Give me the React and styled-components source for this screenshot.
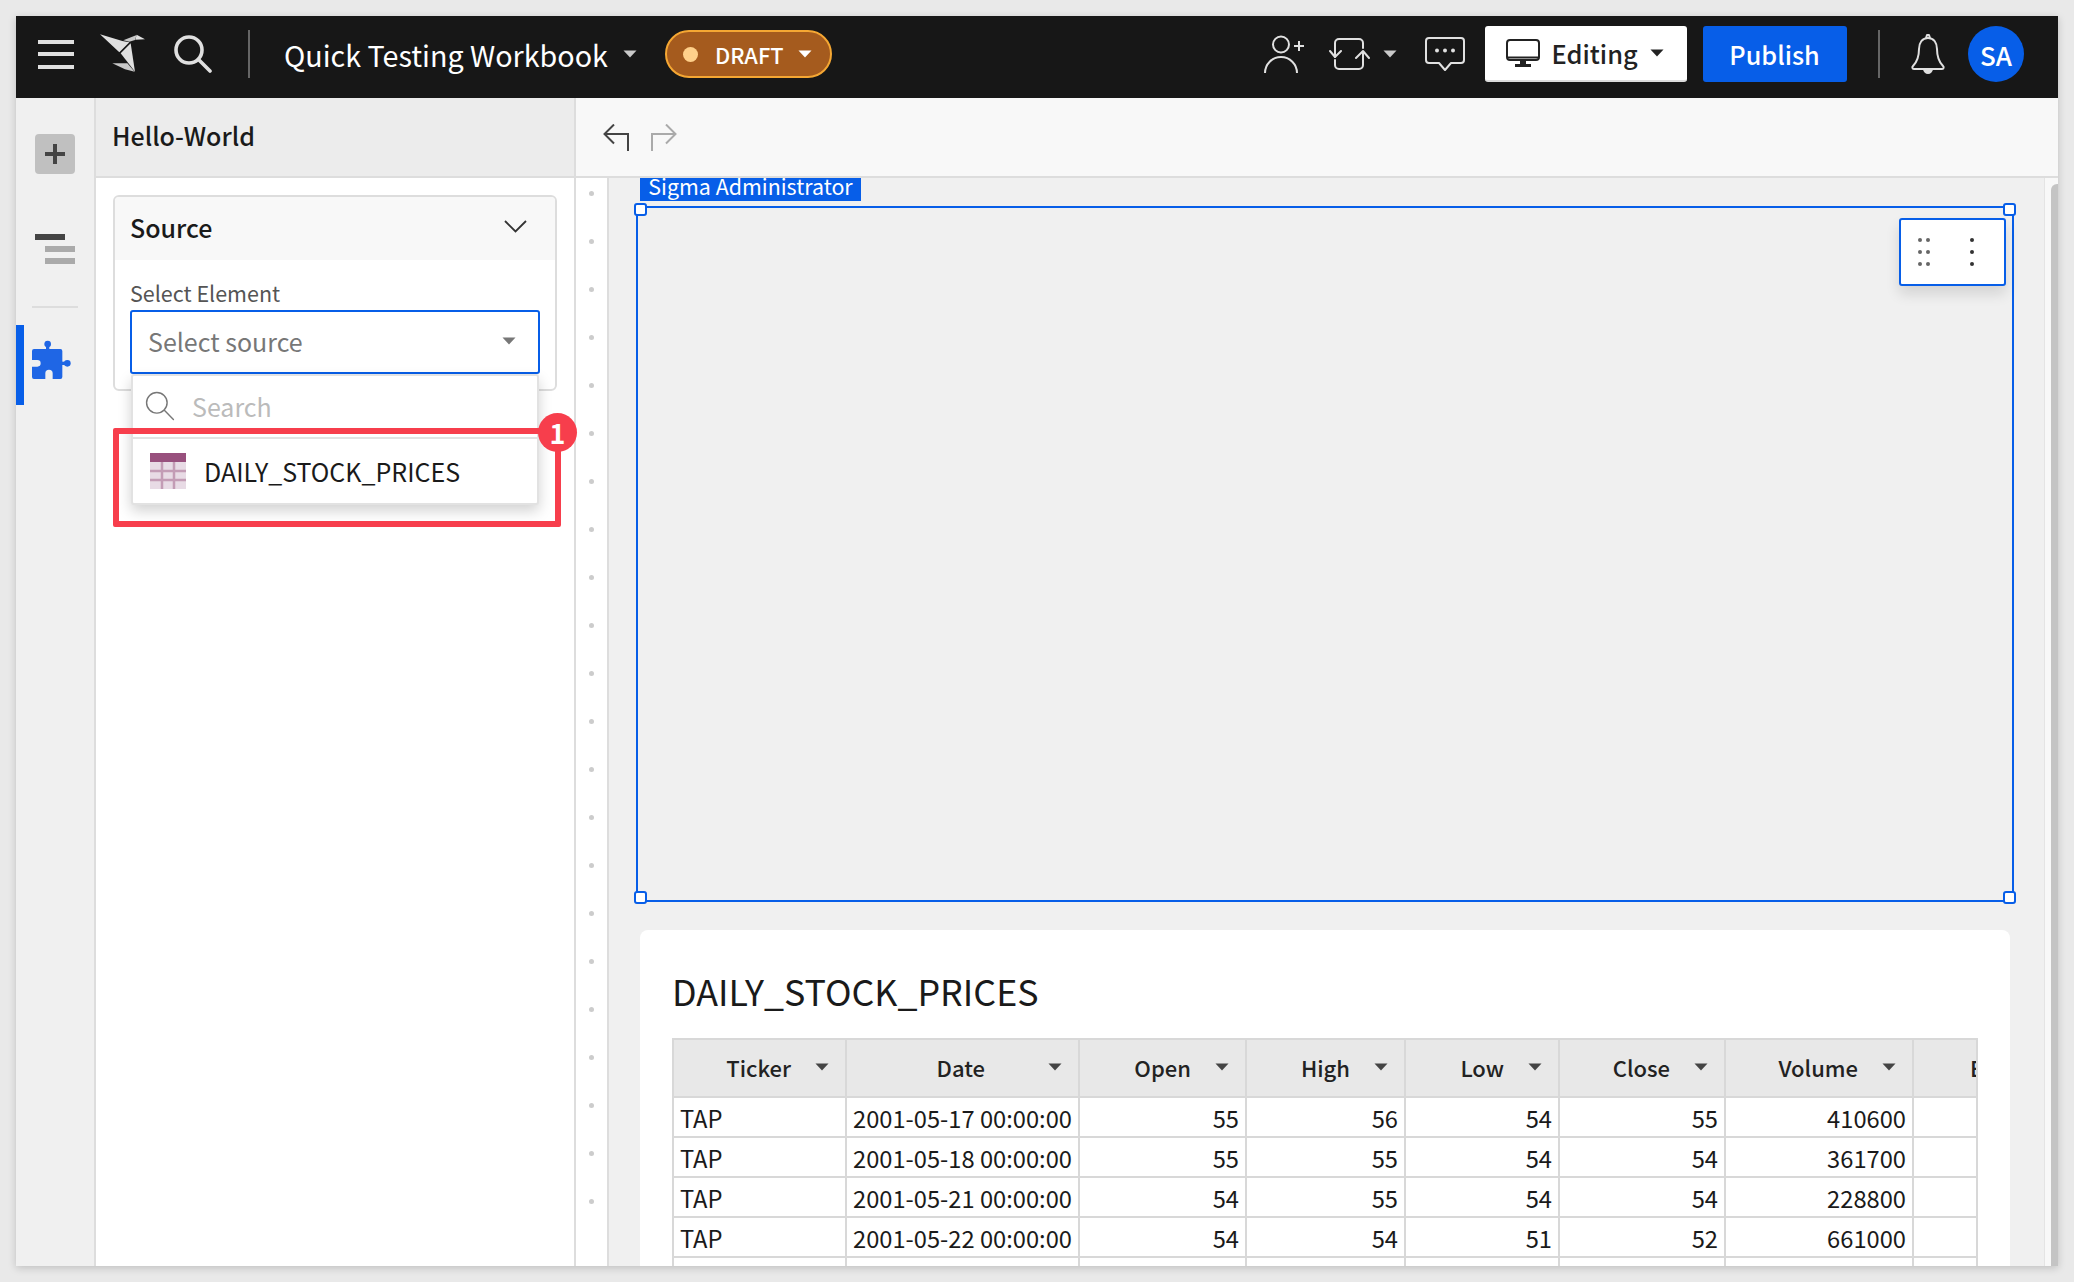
import React from 'react';
import styled, { createGlobalStyle } from 'styled-components';

const GlobalStyle = createGlobalStyle`
  html, body {
    margin: 0;
    padding: 0;
    background: #e9e9e9;
  }
  * {
    box-sizing: border-box;
  }
`;

const columns = [
  { title: 'Ticker', width: 173, gap: 24 },
  { title: 'Date', width: 233, gap: 63 },
  { title: 'Open', width: 167, gap: 24, num: true },
  { title: 'High', width: 159, gap: 24, num: true },
  { title: 'Low', width: 154, gap: 24, num: true },
  { title: 'Close', width: 166, gap: 24, num: true },
  { title: 'Volume', width: 188, gap: 24, num: true },
  { title: 'E', width: 64, last: true },
];

const rows = [
  ['TAP', '2001-05-17 00:00:00', 55, 56, 54, 55, 410600, ''],
  ['TAP', '2001-05-18 00:00:00', 55, 55, 54, 54, 361700, ''],
  ['TAP', '2001-05-21 00:00:00', 54, 55, 54, 54, 228800, ''],
  ['TAP', '2001-05-22 00:00:00', 54, 54, 51, 52, 661000, ''],
  ['', '', '', '', '', '', '', ''],
];

export default function App() {
  return (
    <>
      <GlobalStyle />
      <Page>
        <Window>
          <TopBar>
            <TopGroup>
              <Hamburger>
                <span />
                <span />
                <span />
              </Hamburger>
              <IconSlot $ml={26}>
                <LogoIcon />
              </IconSlot>
              <IconSlot $ml={28}>
                <SearchIcon size={38} color="#e0e0e0" strokeWidth={3.6} />
              </IconSlot>
              <BarDivider $ml={36} />
              <WorkbookTitle>Quick Testing Workbook</WorkbookTitle>
              <IconSlot $ml={15}>
                <Caret color="#c9c9c9" />
              </IconSlot>
              <DraftPill>
                <DraftDot />
                DRAFT
                <Caret color="#fff" />
              </DraftPill>
            </TopGroup>
            <TopGroup>
              <PersonAddIcon />
              <IconSlot $ml={24}>
                <SyncIcon />
              </IconSlot>
              <IconSlot $ml={13}>
                <Caret color="#c9c9c9" />
              </IconSlot>
              <IconSlot $ml={28}>
                <CommentIcon />
              </IconSlot>
              <EditingButton>
                <MonitorIcon />
                Editing
                <Caret color="#222" />
              </EditingButton>
              <PublishButton>Publish</PublishButton>
              <BarDivider $ml={31.5} />
              <IconSlot $ml={-3}>
                <BellIcon />
              </IconSlot>
              <Avatar>SA</Avatar>
            </TopGroup>
          </TopBar>
          <Body>
            <Rail>
              <AddButton>
                <PlusIcon />
              </AddButton>
              <OutlineIcon>
                <OutlineBar />
                <OutlineBar $muted />
                <OutlineBar $muted />
              </OutlineIcon>
              <RailDivider />
              <PluginTab>
                <PuzzleIcon />
              </PluginTab>
            </Rail>
            <SidePanel>
              <PanelHeader>Hello-World</PanelHeader>
              <PanelContent>
                <SourceCard>
                  <SourceHeader>
                    Source
                    <ChevronIcon />
                  </SourceHeader>
                  <SourceBody>
                    <FieldLabel>Select Element</FieldLabel>
                    <SelectField>
                      Select source
                      <Caret color="#777" />
                      <Dropdown>
                        <SearchRow>
                          <SearchIcon size={30} color="#777" strokeWidth={1.8} />
                          Search
                        </SearchRow>
                        <OptionRow>
                          <TableIcon />
                          DAILY_STOCK_PRICES
                        </OptionRow>
                      </Dropdown>
                    </SelectField>
                  </SourceBody>
                </SourceCard>
                <Highlight>
                  <Badge>1</Badge>
                </Highlight>
              </PanelContent>
            </SidePanel>
            <Main>
              <SubBar>
                <UndoIcon color="#444" />
                <RedoIcon color="#aaa" />
              </SubBar>
              <Workspace>
                <Ruler>
                  {Array.from({ length: 22 }, (_, i) => (
                    <RulerDot key={i} />
                  ))}
                </Ruler>
                <Canvas>
                  <SelectedBox>
                    <UserTag>Sigma Administrator</UserTag>
                    <Handle $corner="tl" />
                    <Handle $corner="tr" />
                    <Handle $corner="bl" />
                    <Handle $corner="br" />
                    <FloatingTools>
                      <DotGrid>
                        {Array.from({ length: 6 }, (_, i) => (
                          <ToolDot key={i} />
                        ))}
                      </DotGrid>
                      <Kebab>
                        <ToolDot $dark />
                        <ToolDot $dark />
                        <ToolDot $dark />
                      </Kebab>
                    </FloatingTools>
                  </SelectedBox>
                  <TableCard>
                    <TableTitle>DAILY_STOCK_PRICES</TableTitle>
                    <DataTable>
                      <HeaderRow>
                        {columns.map((col) => (
                          <HeaderCell key={col.title} $width={col.width} $gap={col.gap} $last={col.last}>
                            {col.title}
                            {!col.last && <Caret color="#444" />}
                          </HeaderCell>
                        ))}
                      </HeaderRow>
                      {rows.map((row, r) => (
                        <DataRow key={r}>
                          {row.map((value, c) => (
                            <DataCell key={c} $width={columns[c].width} $num={columns[c].num}>
                              {value}
                            </DataCell>
                          ))}
                        </DataRow>
                      ))}
                    </DataTable>
                  </TableCard>
                </Canvas>
                <ScrollGutter>
                  <ScrollThumb />
                </ScrollGutter>
              </Workspace>
            </Main>
          </Body>
        </Window>
      </Page>
    </>
  );
}

function Caret({ color }) {
  return (
    <CaretSvg viewBox="0 0 14 8" fill={color}>
      <path d="M0.5 0.5h13L7 7.5z" />
    </CaretSvg>
  );
}

function LogoIcon() {
  return (
    <svg width="46" height="40" viewBox="30 27 138 120" fill="#e0e0e0" style={{ display: 'block' }}>
      <polygon points="30,28 97,48 118,52 88,82" />
      <polygon points="100,46 140,30 135,45 118,50" fill="#c8c8c8" />
      <polygon points="140,29 165,43 136,44" />
      <polygon points="92,85 122,55 135,140" />
      <polygon points="67,115 112,115 134,140 105,133" fill="#c8c8c8" />
    </svg>
  );
}

function SearchIcon({ size, color, strokeWidth }) {
  return (
    <svg width={size} height={size} viewBox="0 0 38 38" fill="none" stroke={color} strokeWidth={strokeWidth} strokeLinecap="round" style={{ display: 'block', flexShrink: 0 }}>
      <circle cx="15" cy="15" r="13" />
      <path d="M24.5 24.5L36 36" />
    </svg>
  );
}

function PersonAddIcon() {
  return (
    <svg width="41" height="38" viewBox="0 0 41 38" fill="none" stroke="#e0e0e0" strokeWidth="2" style={{ display: 'block', flexShrink: 0 }}>
      <circle cx="17" cy="9.5" r="8" />
      <path d="M1 38a16 16 0 0 1 32 0" />
      <path d="M30 11h10M35 6v10" />
    </svg>
  );
}

function SyncIcon() {
  return (
    <svg width="41" height="32" viewBox="0 0 41 32" fill="none" stroke="#e0e0e0" strokeWidth="2" strokeLinecap="round" strokeLinejoin="round" style={{ display: 'block' }}>
      <path d="M6 19V5a4 4 0 0 1 4-4h20a4 4 0 0 1 4 4v5" />
      <path d="M1 13l5 6 6-6" />
      <path d="M34 14v13a4 4 0 0 1-4 4H10a4 4 0 0 1-4-4v-5" />
      <path d="M27 20l7-7 6 7" />
    </svg>
  );
}

function CommentIcon() {
  return (
    <svg width="40" height="34" viewBox="0 0 40 34" fill="none" style={{ display: 'block' }}>
      <path d="M4 1h32a3 3 0 0 1 3 3v19a3 3 0 0 1-3 3H26l-6 7-6-7H4a3 3 0 0 1-3-3V4a3 3 0 0 1 3-3z" stroke="#e0e0e0" strokeWidth="2" strokeLinejoin="round" />
      <circle cx="12" cy="13.5" r="2" fill="#e0e0e0" />
      <circle cx="20" cy="13.5" r="2" fill="#e0e0e0" />
      <circle cx="28" cy="13.5" r="2" fill="#e0e0e0" />
    </svg>
  );
}

function MonitorIcon() {
  return (
    <svg width="34" height="28" viewBox="0 0 34 28" fill="none" style={{ flexShrink: 0 }}>
      <rect x="1" y="1" width="32" height="20" rx="3" stroke="#222" strokeWidth="2" />
      <path d="M1 18.5h32" stroke="#222" strokeWidth="2" />
      <path d="M14 21h6v4h-6zM9 25h16v3H9z" fill="#222" />
    </svg>
  );
}

function BellIcon() {
  return (
    <svg width="34" height="40" viewBox="0 0 34 40" fill="none" stroke="#e0e0e0" strokeWidth="2" strokeLinejoin="round" style={{ display: 'block' }}>
      <path d="M17 4c-6 0-9 5-9 11 0 8-2 13-6 17-1 1-1 3 1 3h28c2 0 2-2 1-3-4-4-6-9-6-17 0-6-3-11-9-11z" />
      <path d="M15 4l1-3h2l1 3" />
      <path d="M13 35c0 2 2 4 4 4s4-2 4-4z" fill="#e0e0e0" />
    </svg>
  );
}

function PlusIcon() {
  return (
    <svg width="20" height="20" viewBox="0 0 20 20" fill="#444">
      <path d="M8 0h4v8h8v4h-8v8H8v-8H0V8h8z" />
    </svg>
  );
}

function PuzzleIcon() {
  return (
    <svg width="42" height="40" viewBox="30 30 126 120" fill="#1f66e5" style={{ display: 'block' }}>
      <path d="M42 57H121a6 6 0 0 1 6 6V141a6 6 0 0 1-6 6H98V130a11 11 0 0 0-22 0V147H42a6 6 0 0 1-6-6V110H52a10 10 0 0 0 0-20H36V63a6 6 0 0 1 6-6z" />
      <circle cx="83" cy="42" r="10" />
      <rect x="78" y="42" width="10" height="18" />
      <circle cx="142" cy="100" r="10" />
      <rect x="125" y="95" width="17" height="10" />
    </svg>
  );
}

function ChevronIcon() {
  return (
    <svg width="23" height="13" viewBox="0 0 23 13" fill="none" stroke="#333" strokeWidth="1.8">
      <path d="M1 1l10.5 10.5L22 1" />
    </svg>
  );
}

function TableIcon() {
  return (
    <svg width="36" height="36" viewBox="0 0 36 36" style={{ flexShrink: 0 }}>
      <rect width="36" height="36" fill="#e8dbe5" />
      <rect width="36" height="9" fill="#98507d" />
      <path d="M0 18h36M0 27h36M12 9v27M24 9v27" stroke="#c39cb5" strokeWidth="2.5" />
    </svg>
  );
}

function UndoIcon({ color }) {
  return (
    <svg width="26" height="27" viewBox="0 0 26 27" fill="none" stroke={color} strokeWidth="2">
      <path d="M11 0.5L1.5 10l9.5 9.5" />
      <path d="M2 10h23v17" />
    </svg>
  );
}

function RedoIcon({ color }) {
  return (
    <svg width="26" height="27" viewBox="0 0 26 27" fill="none" stroke={color} strokeWidth="2">
      <path d="M15 0.5L24.5 10 15 19.5" />
      <path d="M24 10H1v17" />
    </svg>
  );
}

const CaretSvg = styled.svg`
  display: block;
  width: 14px;
  height: 8px;
  flex-shrink: 0;
`;

const Page = styled.div`
  width: 2074px;
  height: 1282px;
  padding: 16px;
  background: #e9e9e9;
  font-family: 'Noto Sans CJK SC', 'Noto Sans', sans-serif;
  overflow: hidden;
`;

const Window = styled.div`
  width: 2042px;
  height: 1250px;
  display: flex;
  flex-direction: column;
  overflow: hidden;
  background: #f0f0f0;
  box-shadow: 0 2px 8px rgba(0, 0, 0, 0.18);
`;

const TopBar = styled.header`
  height: 82px;
  flex-shrink: 0;
  display: flex;
  align-items: center;
  justify-content: space-between;
  padding: 0 34px 6px 22px;
  background: #171717;
`;

const TopGroup = styled.div`
  display: flex;
  align-items: center;
`;

const IconSlot = styled.span`
  display: block;
  flex-shrink: 0;
  margin-left: ${(p) => p.$ml}px;
`;

const Hamburger = styled.div`
  width: 36px;
  display: flex;
  flex-direction: column;
  gap: 8.5px;

  span {
    display: block;
    height: 4px;
    background: #e0e0e0;
  }
`;

const BarDivider = styled.div`
  width: 2px;
  height: 48px;
  margin: 0 34px 0 ${(p) => p.$ml}px;
  background: #666;
`;

const WorkbookTitle = styled.div`
  font-size: 28.7px;
  color: #fff;
  white-space: nowrap;
`;

const DraftPill = styled.div`
  height: 48px;
  width: 167px;
  margin-left: 28px;
  display: flex;
  align-items: center;
  gap: 14px;
  padding: 0 16px;
  border: 2px solid #f5a733;
  border-radius: 24px;
  background: #a55b1e;
  color: #fff;
  font-size: 21.8px;
  font-weight: 500;
`;

const DraftDot = styled.span`
  width: 15px;
  height: 15px;
  margin-right: 3px;
  border-radius: 50%;
  background: #ffd08a;
  flex-shrink: 0;
`;

const EditingButton = styled.button`
  width: 202px;
  height: 56px;
  margin-left: 20px;
  display: flex;
  align-items: center;
  gap: 12px;
  padding: 0 21px;
  border: none;
  border-bottom: 2px solid #ddd;
  border-radius: 3px;
  background: #fff;
  color: #222;
  font-family: inherit;
  font-size: 25.4px;
  font-weight: 500;
`;

const PublishButton = styled.button`
  width: 144px;
  height: 56px;
  margin-left: 16px;
  border: none;
  border-radius: 3px;
  background: #075ee8;
  color: #fff;
  font-family: inherit;
  font-size: 25.2px;
  font-weight: 500;
`;

const Avatar = styled.div`
  width: 56px;
  height: 56px;
  margin-left: 23px;
  display: flex;
  align-items: center;
  justify-content: center;
  border-radius: 50%;
  background: #075ee8;
  color: #fff;
  font-size: 26px;
  font-weight: 500;
`;

const Body = styled.div`
  flex: 1;
  min-height: 0;
  display: flex;
`;

const Rail = styled.nav`
  width: 80px;
  flex-shrink: 0;
  display: flex;
  flex-direction: column;
  align-items: flex-start;
  padding-top: 36px;
  background: #f0f0f0;
  border-right: 2px solid #ddd;
`;

const AddButton = styled.div`
  width: 40px;
  height: 40px;
  margin-left: 19px;
  display: flex;
  align-items: center;
  justify-content: center;
  border-radius: 4px;
  background: #c0c0c0;
`;

const OutlineIcon = styled.div`
  width: 40px;
  margin: 60px 0 0 19px;
  display: flex;
  flex-direction: column;
  align-items: flex-start;
  gap: 6px;
`;

const OutlineBar = styled.span`
  width: 30px;
  height: 6px;
  margin-left: ${(p) => (p.$muted ? '10px' : '0')};
  background: ${(p) => (p.$muted ? '#aaa' : '#444')};
`;

const RailDivider = styled.div`
  width: 46px;
  height: 2px;
  margin: 42px 0 0 16px;
  background: #ddd;
`;

const PluginTab = styled.div`
  width: 64px;
  height: 80px;
  margin-top: 17px;
  display: flex;
  align-items: center;
  padding: 0 0 10px 6px;
  border-left: 8px solid #075ee8;
`;

const SidePanel = styled.aside`
  width: 480px;
  flex-shrink: 0;
  display: flex;
  flex-direction: column;
  background: #fff;
  border-right: 2px solid #ddd;
`;

const PanelHeader = styled.div`
  height: 80px;
  flex-shrink: 0;
  display: flex;
  align-items: center;
  padding: 0 0 4px 16px;
  border-bottom: 2px solid #ddd;
  background: #ececec;
  color: #1a1a1a;
  font-size: 25px;
  font-weight: 500;
`;

const PanelContent = styled.div`
  position: relative;
  flex: 1;
  padding: 17px 17px 0 17px;
`;

const SourceCard = styled.section`
  height: 196px;
  border: 2px solid #ddd;
  border-radius: 6px;
`;

const SourceHeader = styled.div`
  height: 63px;
  display: flex;
  align-items: center;
  justify-content: space-between;
  padding: 0 28px 4px 15px;
  border-radius: 4px 4px 0 0;
  background: #f8f8f8;
  color: #1a1a1a;
  font-size: 25px;
  font-weight: 500;
`;

const SourceBody = styled.div`
  padding: 14px 15px 0 15px;
`;

const FieldLabel = styled.div`
  height: 36px;
  display: flex;
  align-items: center;
  color: #555;
  font-size: 21.5px;
`;

const SelectField = styled.div`
  position: relative;
  height: 64px;
  display: flex;
  align-items: center;
  justify-content: space-between;
  padding: 0 22px 2px 16px;
  border: 2px solid #075ee8;
  border-radius: 3px;
  color: #777;
  font-size: 25px;
`;

const Dropdown = styled.div`
  position: absolute;
  top: calc(100% + 2px);
  left: -1px;
  right: -1px;
  height: 131px;
  background: #fff;
  border: 2px solid #e2e2e2;
  border-radius: 3px;
  box-shadow: 0 6px 14px rgba(0, 0, 0, 0.18);
  z-index: 2;
`;

const SearchRow = styled.div`
  height: 63px;
  display: flex;
  align-items: center;
  gap: 17px;
  padding: 0 0 2px 12px;
  color: #bbb;
  font-size: 25px;
  border-bottom: 2px solid #e2e2e2;
`;

const OptionRow = styled.div`
  height: 64px;
  display: flex;
  align-items: center;
  gap: 18px;
  padding-left: 17px;
  color: #1a1a1a;
  font-size: 25px;
`;

const Highlight = styled.div`
  position: absolute;
  left: 17px;
  top: 250px;
  width: 448px;
  height: 99px;
  border: 6px solid #f73e4c;
  border-radius: 2px;
  z-index: 3;
`;

const Badge = styled.div`
  position: absolute;
  top: -21px;
  right: -22px;
  width: 39px;
  height: 39px;
  display: flex;
  align-items: center;
  justify-content: center;
  border-radius: 50%;
  background: #f73e4c;
  color: #fff;
  font-size: 27px;
  font-weight: 700;
`;

const Main = styled.main`
  flex: 1;
  min-width: 0;
  display: flex;
  flex-direction: column;
`;

const SubBar = styled.div`
  height: 80px;
  flex-shrink: 0;
  display: flex;
  align-items: center;
  gap: 22px;
  padding-left: 27px;
  border-bottom: 2px solid #ddd;
  background: #f8f8f8;
`;

const Workspace = styled.div`
  flex: 1;
  min-height: 0;
  display: flex;
`;

const Ruler = styled.div`
  width: 33px;
  flex-shrink: 0;
  display: flex;
  flex-direction: column;
  align-items: center;
  gap: 43px;
  padding-top: 13px;
  overflow: hidden;
  background: #fff;
  border-right: 2px solid #ddd;
`;

const RulerDot = styled.span`
  width: 5px;
  height: 5px;
  flex-shrink: 0;
  border-radius: 50%;
  background: #ccc;
`;

const Canvas = styled.div`
  flex: 1;
  min-width: 0;
  display: flex;
  flex-direction: column;
  padding: 28px 30px 0 27px;
  overflow: hidden;
  background: #f0f0f0;
`;

const SelectedBox = styled.div`
  position: relative;
  height: 696px;
  flex-shrink: 0;
  border: 2px solid #075ee8;
`;

const UserTag = styled.div`
  position: absolute;
  top: -32px;
  left: 2px;
  width: 221px;
  height: 25px;
  display: flex;
  align-items: center;
  justify-content: center;
  padding-bottom: 5px;
  background: #075ee8;
  color: #fff;
  font-size: 21.4px;
  line-height: 1;
  white-space: nowrap;
`;

const handlePlace = {
  tl: 'top: -5px; left: -4px;',
  tr: 'top: -5px; right: -4px;',
  bl: 'bottom: -4px; left: -4px;',
  br: 'bottom: -4px; right: -4px;',
};

const Handle = styled.span`
  position: absolute;
  ${(p) => handlePlace[p.$corner]}
  width: 13px;
  height: 13px;
  border: 2px solid #075ee8;
  border-radius: 3px;
  background: #fff;
`;

const FloatingTools = styled.div`
  position: absolute;
  top: 10px;
  right: 6px;
  width: 107px;
  height: 68px;
  display: flex;
  align-items: center;
  justify-content: space-between;
  padding: 0 30px 0 17px;
  border: 2px solid #075ee8;
  border-radius: 3px;
  background: #fff;
  box-shadow: 0 8px 14px rgba(0, 0, 0, 0.12);
`;

const DotGrid = styled.div`
  display: grid;
  grid-template-columns: 4px 4px;
  column-gap: 4px;
  row-gap: 8px;
`;

const Kebab = styled.div`
  display: flex;
  flex-direction: column;
  gap: 8px;
`;

const ToolDot = styled.span`
  width: 4px;
  height: 4px;
  border-radius: 50%;
  background: ${(p) => (p.$dark ? '#333' : '#666')};
`;

const TableCard = styled.section`
  flex-shrink: 0;
  margin: 28px 4px 0 4px;
  padding: 0 32px;
  border-radius: 8px;
  background: #fff;
`;

const TableTitle = styled.h2`
  height: 108px;
  margin: 0;
  display: flex;
  align-items: center;
  padding-top: 11px;
  color: #1a1a1a;
  font-size: 35.8px;
  font-weight: 400;
`;

const DataTable = styled.div`
  width: 1306px;
  overflow: hidden;
  border: 2px solid #d8d8d8;
  border-bottom: none;
`;

const HeaderRow = styled.div`
  display: flex;
  height: 58px;
  border-bottom: 2px solid #d8d8d8;
  background: #e8e8e8;
`;

const HeaderCell = styled.div`
  flex: 0 0 ${(p) => p.$width}px;
  min-width: 0;
  display: flex;
  align-items: center;
  justify-content: ${(p) => (p.$last ? 'flex-start' : 'flex-end')};
  gap: ${(p) => p.$gap || 0}px;
  padding: ${(p) => (p.$last ? '0 0 2px 56px' : '0 16px 2px 0')};
  border-right: ${(p) => (p.$last ? 'none' : '2px solid #d8d8d8')};
  color: #222;
  font-size: 22px;
  font-weight: 500;
`;

const DataRow = styled.div`
  display: flex;
  height: 40px;
  border-bottom: 2px solid #d8d8d8;
`;

const DataCell = styled.div`
  flex: 0 0 ${(p) => p.$width}px;
  min-width: 0;
  display: flex;
  align-items: center;
  justify-content: ${(p) => (p.$num ? 'flex-end' : 'flex-start')};
  padding: 2px 6px 0;
  border-right: 2px solid #d8d8d8;
  color: #1a1a1a;
  font-size: 23.7px;
  white-space: nowrap;

  &:last-child {
    border-right: none;
  }
`;

const ScrollGutter = styled.div`
  width: 14px;
  flex-shrink: 0;
  padding-top: 6px;
  padding-left: 6px;
  background: #f8f8f8;
  border-left: 1px solid #e4e4e4;
`;

const ScrollThumb = styled.div`
  width: 7px;
  height: 100%;
  border-radius: 6px 0 0 0;
  background: #c4c4c4;
`;
